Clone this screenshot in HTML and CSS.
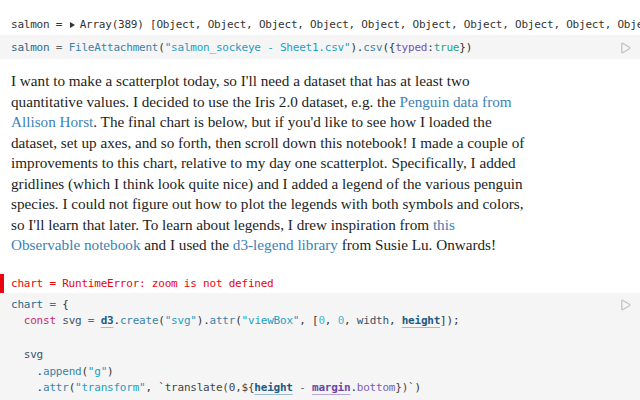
FILE: index.html
```html
<!DOCTYPE html>
<html>
<head>
<meta charset="utf-8">
<link rel="stylesheet" href="styles.css">
</head>
<body>
<div class="cell output">
  <div class="code"><span class="plain">salmon = </span><span class="tri"></span><span class="plain">Array(389) [Object, Object, Object, Object, Object, Object, Object, Object, Object, Object, Object, Object]</span></div>
</div>
<div class="cell src">
  <div class="code"><span class="def">salmon</span> <span class="op">=</span> <span class="fn">FileAttachment</span>(<span class="str">"salmon_sockeye - Sheet1.csv"</span>).<span class="fn">csv</span>({<span class="key">typed</span>:<span class="bool">true</span>})</div>
  <svg class="play" width="10" height="14" viewBox="0 0 10 14"><path d="M1.5 2.2 L8.4 6.3 Q9.2 7 8.4 7.7 L1.5 11.8 Q0.8 12.1 0.8 11.3 L0.8 2.7 Q0.8 1.9 1.5 2.2 Z" fill="none" stroke="#c4c4c4" stroke-width="1.3" stroke-linejoin="round"/></svg>
</div>
<div class="cell prose">
  <p>I want to make a scatterplot today, so I'll need a dataset that has at least two<br>
  quantitative values. I decided to use the Iris 2.0 dataset, e.g. the <a href="#">Penguin data from<br>
  Allison Horst</a>. The final chart is below, but if you'd like to see how I loaded the<br>
  dataset, set up axes, and so forth, then scroll down this notebook! I made a couple of<br>
  improvements to this chart, relative to my day one scatterplot. Specifically, I added<br>
  gridlines (which I think look quite nice) and I added a legend of the various penguin<br>
  species. I could not figure out how to plot the legends with both symbols and colors,<br>
  so I'll learn that later. To learn about legends, I drew inspiration from <a href="#">this<br>
  Observable notebook</a> and I used the <a href="#">d3-legend library</a> from Susie Lu. Onwards!</p>
</div>
<div class="cell error">
  <div class="code">chart = RuntimeError: zoom is not defined</div>
</div>
<div class="cell src big">
  <div class="code"><span class="def">chart</span> <span class="op">=</span> {
  <span class="kw">const</span> <span class="var">svg</span> <span class="op">=</span> <span class="glob">d3</span>.<span class="fn">create</span>(<span class="str">"svg"</span>).<span class="fn">attr</span>(<span class="str">"viewBox"</span>, [<span class="num">0</span>, <span class="num">0</span>, <span class="var">width</span>, <span class="glob">height</span>]);

  <span class="var">svg</span>
    .<span class="fn">append</span>(<span class="str">"g"</span>)
    .<span class="fn">attr</span>(<span class="str">"transform"</span>, <span class="tpl">`translate(0,${</span><span class="glob">height</span> <span class="op">-</span> <span class="glob pur">margin</span>.<span class="prop">bottom</span><span class="tpl">})`</span>)</div>
  <svg class="play" width="10" height="14" viewBox="0 0 10 14"><path d="M1.5 2.2 L8.4 6.3 Q9.2 7 8.4 7.7 L1.5 11.8 Q0.8 12.1 0.8 11.3 L0.8 2.7 Q0.8 1.9 1.5 2.2 Z" fill="none" stroke="#c4c4c4" stroke-width="1.3" stroke-linejoin="round"/></svg>
</div>
</body>
</html>
```

FILE: styles.css
```css
html, body {
  margin: 0;
  padding: 0;
  background: #fff;
  overflow: hidden;
}
.cell {
  position: relative;
  padding: 0 30px 0 11px;
}
.code {
  font-family: "DejaVu Sans Mono", monospace;
  font-size: 11px;
  letter-spacing: -0.22px;
  line-height: 17px;
  white-space: pre;
  color: #333;
  overflow: hidden;
}
.output {
  padding-top: 16px;
  padding-right: 0;
  height: 19px;
}
.tri {
  display: inline-block;
  width: 0;
  height: 0;
  border-top: 3.5px solid transparent;
  border-bottom: 3.5px solid transparent;
  border-left: 5px solid #333;
  margin: 0 5px 0 1px;
  vertical-align: 0;
}
.src {
  background: #f5f5f5;
  padding-top: 4px;
  padding-bottom: 3px;
}
.play {
  position: absolute;
  right: 9px;
  top: 6px;
}
.prose {
  padding-top: 12px;
  padding-bottom: 18px;
}
.prose p {
  margin: 0;
  font-family: "Liberation Serif", serif;
  font-size: 15.2px;
  line-height: 20.5px;
  color: #1b1e23;
}
.prose a {
  color: #3b82b8;
  text-decoration: none;
}
.error {
  border-left: 4px solid #e7040f;
  padding-left: 7px;
  padding-top: 1px;
  padding-bottom: 1px;
}
.error .code {
  color: #e7040f;
}
.big {
  padding-top: 4px;
  height: 110px;
}
.big .code {
  line-height: 16.8px;
}
.big .play {
  top: 5px;
}
.def { color: #2c6a8c; }
.op { color: #666; }
.fn { color: #3a84a8; }
.str { color: #1aa0c4; }
.key { color: #7850b5; }
.bool { color: #27a08a; }
.kw { color: #cc2a6f; }
.var { color: #3b5468; }
.num { color: #45b7d3; }
.prop { color: #7a5cb8; }
.tpl { color: #444; }
.glob {
  color: #1d5a85;
  font-weight: bold;
  text-decoration: underline;
  text-decoration-color: #9bbdd3;
  text-underline-offset: 3px;
}
.glob.pur { color: #6b45a8; text-decoration-color: #b9a7d8; }
```
